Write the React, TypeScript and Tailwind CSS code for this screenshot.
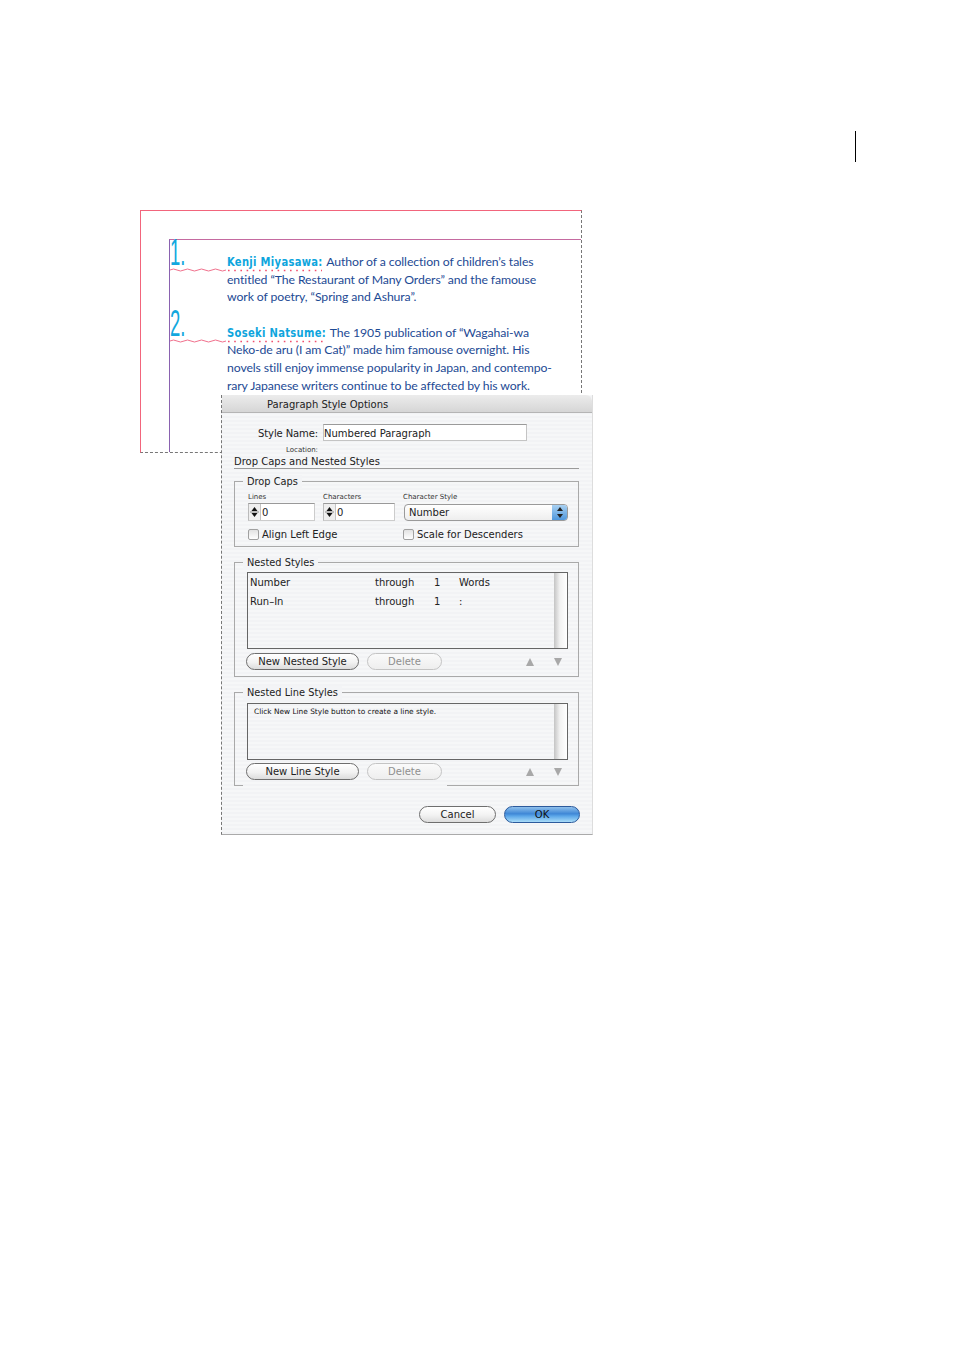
const sans = "font-['DejaVu_Sans',sans-serif]"

function Wave({ dots }: { dots: number }) {
  return (
    <svg className="absolute left-0 top-[15px]" width="160" height="6" viewBox="0 0 160 6" fill="none">
      <path
        d="M0 2 q3.5 -2 7 0 t7 0 t7 0 t7 0 t7 0 t7 0 t7 0 t7 0"
        stroke="#f0708c"
        strokeWidth="1"
      />
      <line x1="58" y1="2.5" x2={dots} y2="2.5" stroke="#f0506e" strokeWidth="1.4" strokeDasharray="1.6 4.6" />
    </svg>
  )
}

function Para({ num, head, first, lines, dots, top }: { num: string; head: string; first: string; lines: string[]; dots: number; top: string }) {
  return (
    <div className={`relative pl-[57px] ${top}`}>
      <div className="absolute left-0 top-[-20px] origin-left font-['Liberation_Sans',sans-serif] text-[37px] leading-[40px] text-[#12a8de] scale-x-[0.5]">
        {num}
      </div>
      <Wave dots={dots} />
      <div className="h-[17.7px]">
        <span className="mr-[1px] inline-block -translate-y-px scale-y-125 font-['DejaVu_Sans',sans-serif] text-[10px] font-bold leading-[17px] tracking-[0.3px] text-[#0ea5dd]">{head}</span>{' '}
        {first}
      </div>
      {lines.map((l) => (
        <div key={l} className="h-[17.7px]">{l}</div>
      ))}
    </div>
  )
}

function Group({ title, className, children }: { title: string; className: string; children: React.ReactNode }) {
  return (
    <div className={`relative ml-[12px] mr-[13px] border border-[#a9a9a9] ${className}`}>
      <div className="absolute left-[8px] top-[-7px] bg-[#f3f4f6] px-[4px] text-[9.8px] leading-[14px] text-[#222]">{title}</div>
      {children}
    </div>
  )
}

function Pill({ label, width, disabled, blue }: { label: string; width: string; disabled?: boolean; blue?: boolean }) {
  const look = blue
    ? 'border-[#2c5a9c] bg-[linear-gradient(#8fc0ec,#3f87d6_45%,#5aa5e8_60%,#a9dcf8)] text-[#111]'
    : disabled
      ? 'border-[#c4c4c4] bg-[linear-gradient(#fafafa,#eeeeee)] text-[#8f8f8f]'
      : 'border-[#6e6e6e] bg-[linear-gradient(#ffffff,#f2f2f2_55%,#dcdcdc)] text-[#222]'
  return (
    <div className={`flex h-[17px] items-center justify-center rounded-full border text-[10px] ${width} ${look}`}>
      {label}
    </div>
  )
}

function Arrows() {
  return (
    <div className="ml-auto mr-[6px] flex gap-[20px]">
      <svg width="8" height="8" viewBox="0 0 8 8"><path d="M4 0 L8 8 H0 Z" fill="#a8a8a8" /></svg>
      <svg width="8" height="8" viewBox="0 0 8 8"><path d="M0 0 H8 L4 8 Z" fill="#a8a8a8" /></svg>
    </div>
  )
}

function Stepper({ width }: { width: string }) {
  return (
    <div className={`flex h-[18px] items-center border-b border-l border-r border-t border-b-[#ccc] border-l-[#bbb] border-r-[#ccc] border-t-[#999] bg-white ${width}`}>
      <svg className="shrink-0" width="12" height="16" viewBox="0 0 12 16">
        <rect x="0" y="0" width="12" height="16" fill="#efefef" />
        <path d="M5.5 3 L8.5 7 H2.5 Z M5.5 13 L8.5 9 H2.5 Z" fill="#111" />
        <line x1="1" y1="8" x2="10" y2="8" stroke="#888" />
        <line x1="11.5" y1="0" x2="11.5" y2="16" stroke="#c4c4c4" />
      </svg>
      <span className="ml-[1px] text-[10px] text-[#222]">0</span>
    </div>
  )
}

function Check({ label, width }: { label: string; width: string }) {
  return (
    <div className={`flex items-center gap-[3px] text-[10px] text-[#222] ${width}`}>
      <div className="h-[11px] w-[11px] rounded-[2px] border border-[#a0a0a0] bg-[linear-gradient(#e2e2e2,#ffffff)]" />
      {label}
    </div>
  )
}

function ListBox({ height, children }: { height: string; children: React.ReactNode }) {
  return (
    <div className={`relative ml-[12px] mr-[10px] border border-[#666] ${height}`}>
      {children}
      <div className="absolute bottom-0 right-0 top-0 w-[13px] bg-[linear-gradient(90deg,#c4c4c4,#f2f2f2_45%,#ffffff)]" />
    </div>
  )
}

function Row({ a, b, c, d }: { a: string; b: string; c: string; d: string }) {
  return (
    <div className="flex h-[19px] items-center pl-[2px] text-[10px] text-[#222]">
      <span className="w-[125px]">{a}</span>
      <span className="w-[59px]">{b}</span>
      <span className="w-[25px]">{c}</span>
      <span>{d}</span>
    </div>
  )
}

export default function App() {
  return (
    <main className="h-[1350px] w-full overflow-hidden bg-white">
      <div className="h-[210px] pl-[855px] pt-[131px]">
        <div className="h-[31px] w-px bg-black" />
      </div>

      <div className="relative ml-[140px] h-[243px] w-[442px] border-b border-l border-r border-t border-b-[#777] border-l-[#f2657c] border-r-[#777] border-t-[#f2657c] [border-bottom-style:dashed] [border-right-style:dashed]">
        <div className="ml-[28px] mt-[28px] h-[213px] border-l border-t border-l-[#8a62b0] border-t-[#c56aa0] pt-[13px] font-['Lato',sans-serif] text-[12.25px] leading-[17.7px] tracking-[-0.1px] whitespace-nowrap text-[#1d4a94]">
          <Para
            num="1."
            head="Kenji Miyasawa:"
            first="Author of a collection of children’s tales"
            lines={['entitled “The Restaurant of Many Orders” and the famouse', 'work of poetry, “Spring and Ashura”.']}
            dots={152}
            top=""
          />
          <Para
            num="2."
            head="Soseki Natsume:"
            first="The 1905 publication of “Wagahai-wa"
            lines={[
              'Neko-de aru (I am Cat)” made him famouse overnight. His',
              'novels still enjoy immense popularity in Japan, and contempo-',
              'rary Japanese writers continue to be affected by his work.',
            ]}
            dots={154}
            top="mt-[17.7px]"
          />
        </div>

        {/* dialog sits on top of the page frame */}
        <div className={`absolute left-[80px] top-[184px] flex h-[440px] w-[372px] flex-col border-b border-l border-r border-b-[#aaa] border-l-[#777] border-r-[#ddd] bg-[repeating-linear-gradient(0deg,#f2f3f5_0px,#f2f3f5_2px,#f6f7f8_2px,#f6f7f8_4px)] [border-left-style:dashed] ${sans}`}>
          <div className="h-[18px] shrink-0 rounded-tr-[6px] border-b border-[#b5b5b5] bg-[linear-gradient(#ececec,#d6d6d6)] pl-[45px] pt-px text-[10px] leading-[18px] text-[#222]">
            Paragraph Style Options
          </div>

          <div className="mt-[11px] flex items-center pl-[36px] text-[10px] text-[#222]">
            <span className="w-[61px] pt-[2px] tracking-[-0.1px]">Style Name:</span>
            <div className="ml-[4px] h-[17px] w-[204px] border border-[#c4c4c4] border-t-[#9a9a9a] bg-white leading-[17px]">
              Numbered Paragraph
            </div>
          </div>
          <div className="mt-[5px] pl-[64px] text-[7px] leading-[9px] text-[#333]">Location:</div>
          <div className="ml-[12px] mr-[13px] border-b border-[#9a9a9a] text-[10px] leading-[13px] text-[#222]">
            Drop Caps and Nested Styles
          </div>

          <Group title="Drop Caps" className="mt-[12px] h-[66px]">
            <div className="flex pl-[13px] pt-[11px] text-[7px] leading-[9px] text-[#333]">
              <span className="w-[75px]">Lines</span>
              <span className="w-[80px]">Characters</span>
              <span>Character Style</span>
            </div>
            <div className="mt-[1px] flex items-center pl-[13px]">
              <Stepper width="w-[67px]" />
              <div className="w-[8px]" />
              <Stepper width="w-[72px]" />
              <div className="ml-[9px] flex h-[17px] w-[164px] items-center rounded-[4px] border border-[#9a9a9a] bg-[linear-gradient(#ffffff,#eeeeee)] pl-[4px] text-[10px] text-[#222]">
                Number
                <div className="ml-auto flex h-full w-[15px] items-center justify-center rounded-r-[3px] bg-[linear-gradient(#a9d1f2,#4f97dc)]">
                  <svg width="6" height="11" viewBox="0 0 6 11"><path d="M3 0 L6 4 H0 Z M3 11 L6 7 H0 Z" fill="#222" /></svg>
                </div>
              </div>
            </div>
            <div className="mt-[6px] flex pl-[13px]">
              <Check label="Align Left Edge" width="w-[155px]" />
              <Check label="Scale for Descenders" width="" />
            </div>
          </Group>

          <Group title="Nested Styles" className="mt-[15px] h-[115px]">
            <div className="h-[9px]" />
            <ListBox height="h-[77px]">
              <Row a="Number" b="through" c="1" d="Words" />
              <Row a="Run–In" b="through" c="1" d=":" />
            </ListBox>
            <div className="mt-[4px] flex items-center pl-[11px]">
              <Pill label="New Nested Style" width="w-[113px]" />
              <div className="w-[8px]" />
              <Pill label="Delete" width="w-[75px]" disabled />
              <Arrows />
              <div className="w-[10px]" />
            </div>
          </Group>

          <Group title="Nested Line Styles" className="mt-[15px] h-[94px] border-b-0">
            <div className="h-[10px]" />
            <ListBox height="h-[57px]">
              <div className="pl-[6px] pt-[3px] text-[7.4px] leading-[10px] text-[#111]">
                Click New Line Style button to create a line style.
              </div>
            </ListBox>
            <div className="mt-[3px] flex items-center pl-[11px]">
              <Pill label="New Line Style" width="w-[113px]" />
              <div className="w-[8px]" />
              <Pill label="Delete" width="w-[75px]" disabled />
              <Arrows />
              <div className="w-[10px]" />
            </div>
            <div className="absolute bottom-0 left-[212px] right-0 h-px bg-[#a9a9a9]" />
            <div className="absolute bottom-0 left-0 h-px w-[8px] bg-[#a9a9a9]" />
          </Group>

          <div className="mr-[12px] mt-[20px] flex justify-end gap-[8px]">
            <Pill label="Cancel" width="w-[77px]" />
            <Pill label="OK" width="w-[76px]" blue />
          </div>
        </div>
      </div>
    </main>
  )
}
